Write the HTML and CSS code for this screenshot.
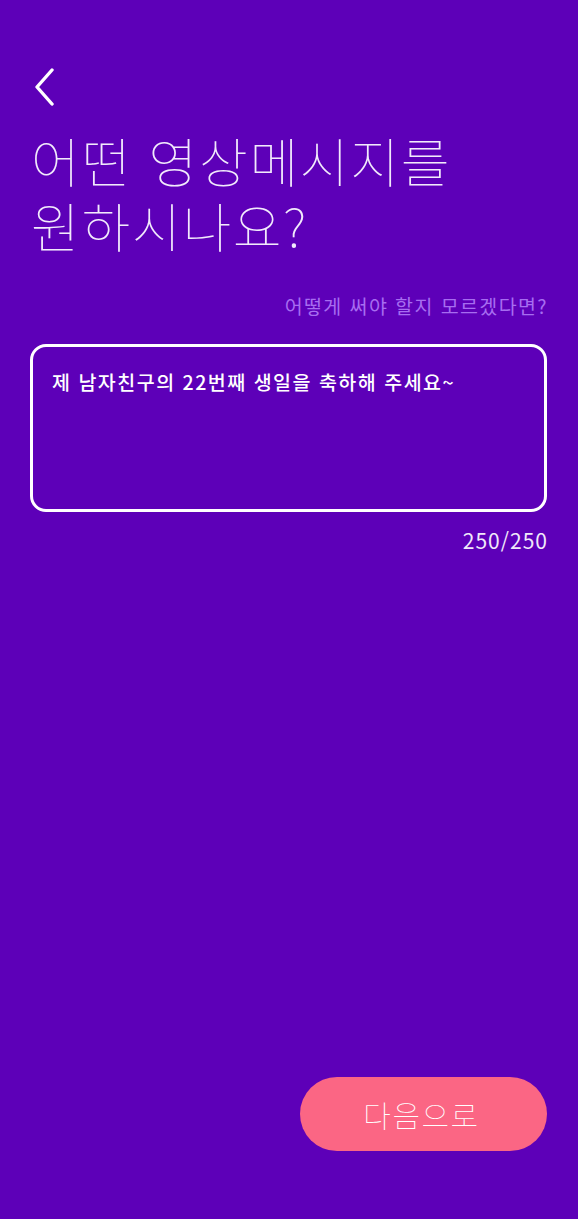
FILE: index.html
```html
<!DOCTYPE html>
<html lang="ko">
<head>
<meta charset="utf-8">
<link rel="stylesheet" href="styles.css">
</head>
<body>
<div class="screen">
  <header class="top">
    <button class="back" aria-label="뒤로">
      <svg width="22" height="38" viewBox="0 0 22 38"><path d="M19 2 L4 19 L19 36" fill="none" stroke="#fff" stroke-width="3.4" stroke-linecap="round" stroke-linejoin="round"/></svg>
    </button>
  </header>
  <h1 class="title"><span class="line">어떤 영상메시지를</span><span class="line">원하시나요?</span></h1>
  <div class="hint">어떻게 써야 할지 모르겠다면?</div>
  <div class="box">제 남자친구의 22번째 생일을 축하해 주세요~</div>
  <div class="count">250/250</div>
  <div class="spacer"></div>
  <div class="actions">
    <button class="next">다음으로</button>
  </div>
</div>
</body>
</html>
```
FILE: styles.css
```css
html, body { margin: 0; padding: 0; }
body {
  background: #5d00b8;
  font-family: "Noto Sans CJK KR", "Noto Sans", sans-serif;
  color: #fff;
}
.screen {
  height: 1219px;
  display: flex;
  flex-direction: column;
  padding: 0 31px 0 30px;
  box-sizing: border-box;
}
.top { padding-top: 68px; height: 40px; }
.back {
  background: none; border: 0; padding: 0; margin-left: 3px;
  display: block; cursor: pointer;
}
.title {
  margin: 20px 0 0 1px;
  font-size: 53px;
  font-weight: 100;
  color: #f2eafc;
  letter-spacing: 1.7px;
}
.title .line {
  display: block;
  height: 65px;
  line-height: 65px;
  overflow: visible;
}
.hint {
  margin-top: 35px;
  text-align: right;
  font-size: 19.5px;
  color: #a76df0;
  line-height: 26px;
  letter-spacing: 1.4px;
  margin-right: -1px;
}
.box {
  margin-top: 25px;
  height: 168px;
  box-sizing: border-box;
  border: 3px solid #fff;
  border-radius: 16px;
  padding: 22px 19px;
  font-size: 19.5px;
  font-weight: 500;
  line-height: 26px;
  letter-spacing: 1.5px;
}
.count {
  margin-top: 15px;
  text-align: right;
  font-size: 21px;
  line-height: 26px;
  color: #f0e8fa;
  letter-spacing: 1px;
  margin-right: -1px;
}
.spacer { flex: 1; }
.actions { display: flex; justify-content: flex-end; padding-bottom: 68px; }
.next {
  width: 247px; height: 74px;
  border: 0; border-radius: 37px;
  background: #fb6684;
  color: #fff;
  font-family: inherit;
  font-size: 30px;
  font-weight: 100;
  letter-spacing: 1.5px;
  padding-left: 2px;
}
```
